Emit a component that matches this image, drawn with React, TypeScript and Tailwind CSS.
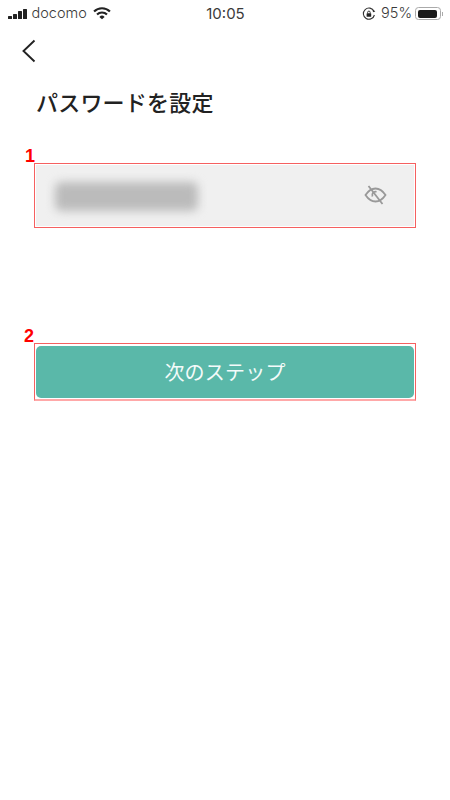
const jpFont = '[font-family:"Noto_Sans_CJK_JP","Liberation_Sans",sans-serif]';

function StatusBar() {
  return (
    <div className="h-[27px] pl-[8px] pr-[7px] flex items-center justify-between text-[14px] text-[#3a3a3a] [font-family:Inter,'Liberation_Sans',sans-serif]">
      <div className="flex items-center w-[150px]">
        <div className="flex items-end gap-[1.5px] h-[10px] mt-[1px]">
          <span className="w-[3.5px] h-[3.5px] bg-[#222] rounded-[0.5px]" />
          <span className="w-[3.5px] h-[5.5px] bg-[#222] rounded-[0.5px]" />
          <span className="w-[3.5px] h-[8px] bg-[#222] rounded-[0.5px]" />
          <span className="w-[3.5px] h-[10px] bg-[#222] rounded-[0.5px]" />
        </div>
        <span className="ml-[5px] text-[14.500px] leading-none font-light">docomo</span>
        <svg className="ml-[6px]" width="18" height="13" viewBox="0 0 17 12">
          <path d="M1 4.2a10.5 10.5 0 0 1 15 0" fill="none" stroke="#222" strokeWidth="2" />
          <path d="M3.8 7a6.6 6.6 0 0 1 9.4 0" fill="none" stroke="#222" strokeWidth="2" />
          <path d="M8.5 11.5 6 9.2a3.6 3.6 0 0 1 5 0z" fill="#222" />
        </svg>
      </div>
      <span className="text-[15px] leading-none">10:05</span>
      <div className="flex items-center justify-end w-[150px]">
        <svg width="14" height="14" viewBox="0 0 14 14">
          <path d="M12 4.2A5.6 5.6 0 1 0 12.4 8" fill="none" stroke="#333" strokeWidth="1.1" />
          <path d="M13.4 4.4 11 5.2l-.4-2.6z" fill="#333" />
          <rect x="4.6" y="6.2" width="4.6" height="3.6" rx=".5" fill="#222" />
          <path d="M5.6 6.4V5.4a1.3 1.3 0 0 1 2.6 0v1" fill="none" stroke="#222" strokeWidth=".9" />
        </svg>
        <span className="ml-[5px] text-[14.500px] leading-none font-light">95%</span>
        <div className="ml-[3px] w-[26px] h-[13px] border border-[#aaa] rounded-[3.5px] p-[1.5px]">
          <div className="h-full w-[95%] bg-[#1a1a1a] rounded-[2px]" />
        </div>
        <span className="w-[1px] h-[4px] bg-[#aaa] ml-[1px]" />
      </div>
    </div>
  );
}

function HiddenEye() {
  return (
    <svg width="23" height="20" viewBox="0 0 23 20" fill="none" stroke="#999" strokeWidth="1.800" className="mb-[1px]">
      <path d="M1.500 10C4.500 5.500 8 3.500 11.500 3.500S18.500 5.500 21.500 10C18.500 14.500 15 16.500 11.500 16.500S4.500 14.500 1.500 10Z" />
      <path d="M8.500 11.500A3.400 3.400 0 0 1 12.500 6.800" />
      <path d="M4.500 1 18.500 19" />
    </svg>
  );
}

export default function App() {
  return (
    <div className={`w-[450px] h-[800px] bg-white overflow-hidden ${jpFont}`}>
      <StatusBar />

      <div className="pl-[21px] pt-[12px] h-[45px]">
        <svg width="16" height="24" viewBox="0 0 16 24">
          <path d="M13.500 1.500 2.500 12l11 10.500" fill="none" stroke="#222" strokeWidth="1.900" />
        </svg>
      </div>

      <h1 className="pl-[36px] pt-[14px] text-[22px] leading-[30px] font-medium text-[#222] tracking-[0.2px]">
        パスワードを設定
      </h1>

      <div className="relative mt-[47px] mx-[34px] h-[65px] border border-[#f56060] p-[1px]">
        <span className="absolute left-[-10px] top-[-17px] text-[18px] leading-[18px] font-bold text-[#f00] [font-family:'Liberation_Sans',sans-serif]">
          1
        </span>
        <div className="h-full bg-[#f0f0f0] flex items-center justify-between pl-[19px] pr-[27px]">
          <div className="w-[143px] h-[29px] mt-[2px] bg-[#bbbbbb] rounded-[6px] blur-[5px]" />
          <HiddenEye />
        </div>
      </div>

      <div className="relative mt-[115px] mx-[34px] h-[58px] border border-[#f56060] border-b-[#ffa8a8] border-b-2 px-[1px] pt-[2px] pb-[1px]">
        <span className="absolute left-[-11px] top-[-17px] text-[18px] leading-[18px] font-bold text-[#f00] [font-family:'Liberation_Sans',sans-serif]">
          2
        </span>
        <button className="w-full h-[52px] bg-[#5ab8a9] rounded-[5px] text-[#f4fbfa] text-[20px] tracking-[0.2px] font-normal flex items-center justify-center pb-[1px]">
          次のステップ
        </button>
      </div>
    </div>
  );
}
